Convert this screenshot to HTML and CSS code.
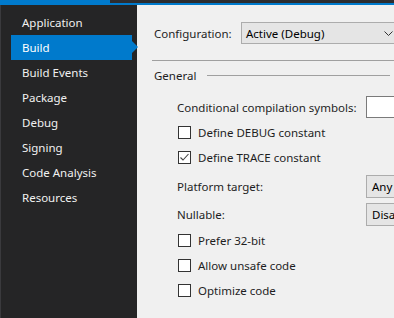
FILE: index.html
```html
<!DOCTYPE html>
<html lang="en">
<head>
    <meta charset="UTF-8">
    <meta name="viewport" content="width=device-width, initial-scale=1.0">
    <title>Build</title>
    <link rel="stylesheet" href="styles.css">
</head>
<body>
    <div class="tabstrip">
        <div class="tab-active"></div>
    </div>

    <div class="main">
        <div class="sidebar">
            <div class="nav-item">Application</div>
            <div class="nav-item selected">Build</div>
            <div class="nav-item">Build Events</div>
            <div class="nav-item">Package</div>
            <div class="nav-item">Debug</div>
            <div class="nav-item">Signing</div>
            <div class="nav-item">Code Analysis</div>
            <div class="nav-item">Resources</div>
        </div>

        <div class="content">
            <div class="config-row">
                <span class="config-label">Configuration:</span>
                <div class="combo config-combo">
                    <span>Active (Debug)</span>
                    <svg class="chevron" width="9" height="5" viewBox="0 0 9 5"><path d="M0.5 0.5 L4.5 4.5 L8.5 0.5" fill="none" stroke="#333" stroke-width="1"/></svg>
                </div>
            </div>

            <div class="separator"></div>

            <div class="section-head">
                <span>General</span>
                <div class="section-line"></div>
            </div>

            <div class="row field-row first-field">
                <span class="field-label">Conditional compilation symbols:</span>
                <div class="textbox"></div>
            </div>

            <div class="row check-row debug-row">
                <span class="checkbox"></span>
                <span>Define DEBUG constant</span>
            </div>
            <div class="row check-row">
                <span class="checkbox">
                    <svg width="11" height="11" viewBox="0 0 11 11"><path d="M1.5 5.5 L4 8 L9.5 2" fill="none" stroke="#444" stroke-width="1.1"/></svg>
                </span>
                <span>Define TRACE constant</span>
            </div>

            <div class="row field-row platform-row">
                <span class="field-label">Platform target:</span>
                <div class="combo small-combo">Any CPU</div>
            </div>
            <div class="row field-row nullable-row">
                <span class="field-label">Nullable:</span>
                <div class="combo small-combo">Disable</div>
            </div>

            <div class="row check-row prefer-row">
                <span class="checkbox"></span>
                <span>Prefer 32-bit</span>
            </div>
            <div class="row check-row">
                <span class="checkbox"></span>
                <span>Allow unsafe code</span>
            </div>
            <div class="row check-row">
                <span class="checkbox"></span>
                <span>Optimize code</span>
            </div>

            <div class="section-head errors-head">
                <span>Errors and warnings</span>
                <div class="section-line"></div>
            </div>
        </div>
    </div>
</body>
</html>
```

FILE: styles.css
```css
body {
    margin: 0;
    font-family: "Noto Sans", "Open Sans", sans-serif;
    font-size: 11.5px;
    background-color: #252526;
    width: 394px;
    height: 318px;
    overflow: hidden;
}

.tabstrip {
    height: 3px;
    background-color: #2d2d30;
    border-bottom: 2px solid #007acc;
}

.tab-active {
    width: 110px;
    height: 3px;
    background-color: #007acc;
}

.main {
    display: flex;
    height: 313px;
}

/* левая навигация */
.sidebar {
    width: 137px;
    flex-shrink: 0;
    background-color: #252526;
    border-left: 1px solid #3a3a3d;
    padding-top: 5px;
    box-sizing: border-box;
}

.nav-item {
    height: 25px;
    line-height: 26px;
    margin-left: 10px;
    width: 121px;
    padding-left: 11px;
    box-sizing: border-box;
    color: #f1f1f1;
    position: relative;
}

.nav-item.selected {
    background-color: #007acc;
    color: #fff;
}

.nav-item.selected::after {
    content: "";
    position: absolute;
    left: 121px;
    top: 6px;
    border-left: 6px solid #007acc;
    border-top: 6px solid transparent;
    border-bottom: 6px solid transparent;
}

/* основная часть */
.content {
    flex: 1;
    background-color: #f0f0f0;
    color: #1e1e1e;
    padding-left: 17px;
    overflow: hidden;
}

.config-row {
    display: flex;
    align-items: center;
    height: 22px;
    margin-top: 17px;
}

.config-label {
    width: 87px;
    flex-shrink: 0;
}

.combo {
    background-color: #e5e5e5;
    border: 1px solid #acacac;
    box-sizing: border-box;
    display: flex;
    align-items: center;
    padding-left: 4px;
    color: #000;
    flex-shrink: 0;
    white-space: nowrap;
}

.config-combo {
    height: 22px;
    width: 165px;
    position: relative;
}

.chevron {
    position: absolute;
    left: 142px;
    top: 8px;
}

.separator {
    margin-top: 16px;
    margin-left: -2px;
    height: 1px;
    background-color: #a0a0a0;
}

.section-head {
    display: flex;
    align-items: center;
    height: 16px;
    margin-top: 6px;
}

.section-line {
    flex: 1;
    height: 1px;
    background-color: #a0a0a0;
    margin-left: 11px;
    margin-right: 4px;
}

.row {
    display: flex;
    align-items: center;
    margin-left: 23px;
}

.field-row {
    height: 23px;
}

.first-field {
    margin-top: 13px;
    height: 22px;
}

.field-label {
    width: 189px;
    flex-shrink: 0;
}

.textbox {
    width: 40px;
    height: 22px;
    background-color: #fff;
    border: 1px solid #7a7a7a;
    box-sizing: border-box;
    flex-shrink: 0;
}

.small-combo {
    width: 60px;
    height: 23px;
    padding-left: 5px;
}

.platform-row {
    margin-top: 5px;
}

.nullable-row {
    margin-top: 5px;
}

.check-row {
    height: 25px;
    margin-left: 24px;
}

.debug-row {
    margin-top: 2px;
}

.prefer-row {
    margin-top: 2px;
}

.checkbox {
    width: 13px;
    height: 13px;
    border: 1px solid #333;
    background-color: #fff;
    box-sizing: border-box;
    margin-right: 7px;
    display: flex;
    align-items: center;
    justify-content: center;
    flex-shrink: 0;
}

.errors-head {
    margin-top: 11px;
}
```
